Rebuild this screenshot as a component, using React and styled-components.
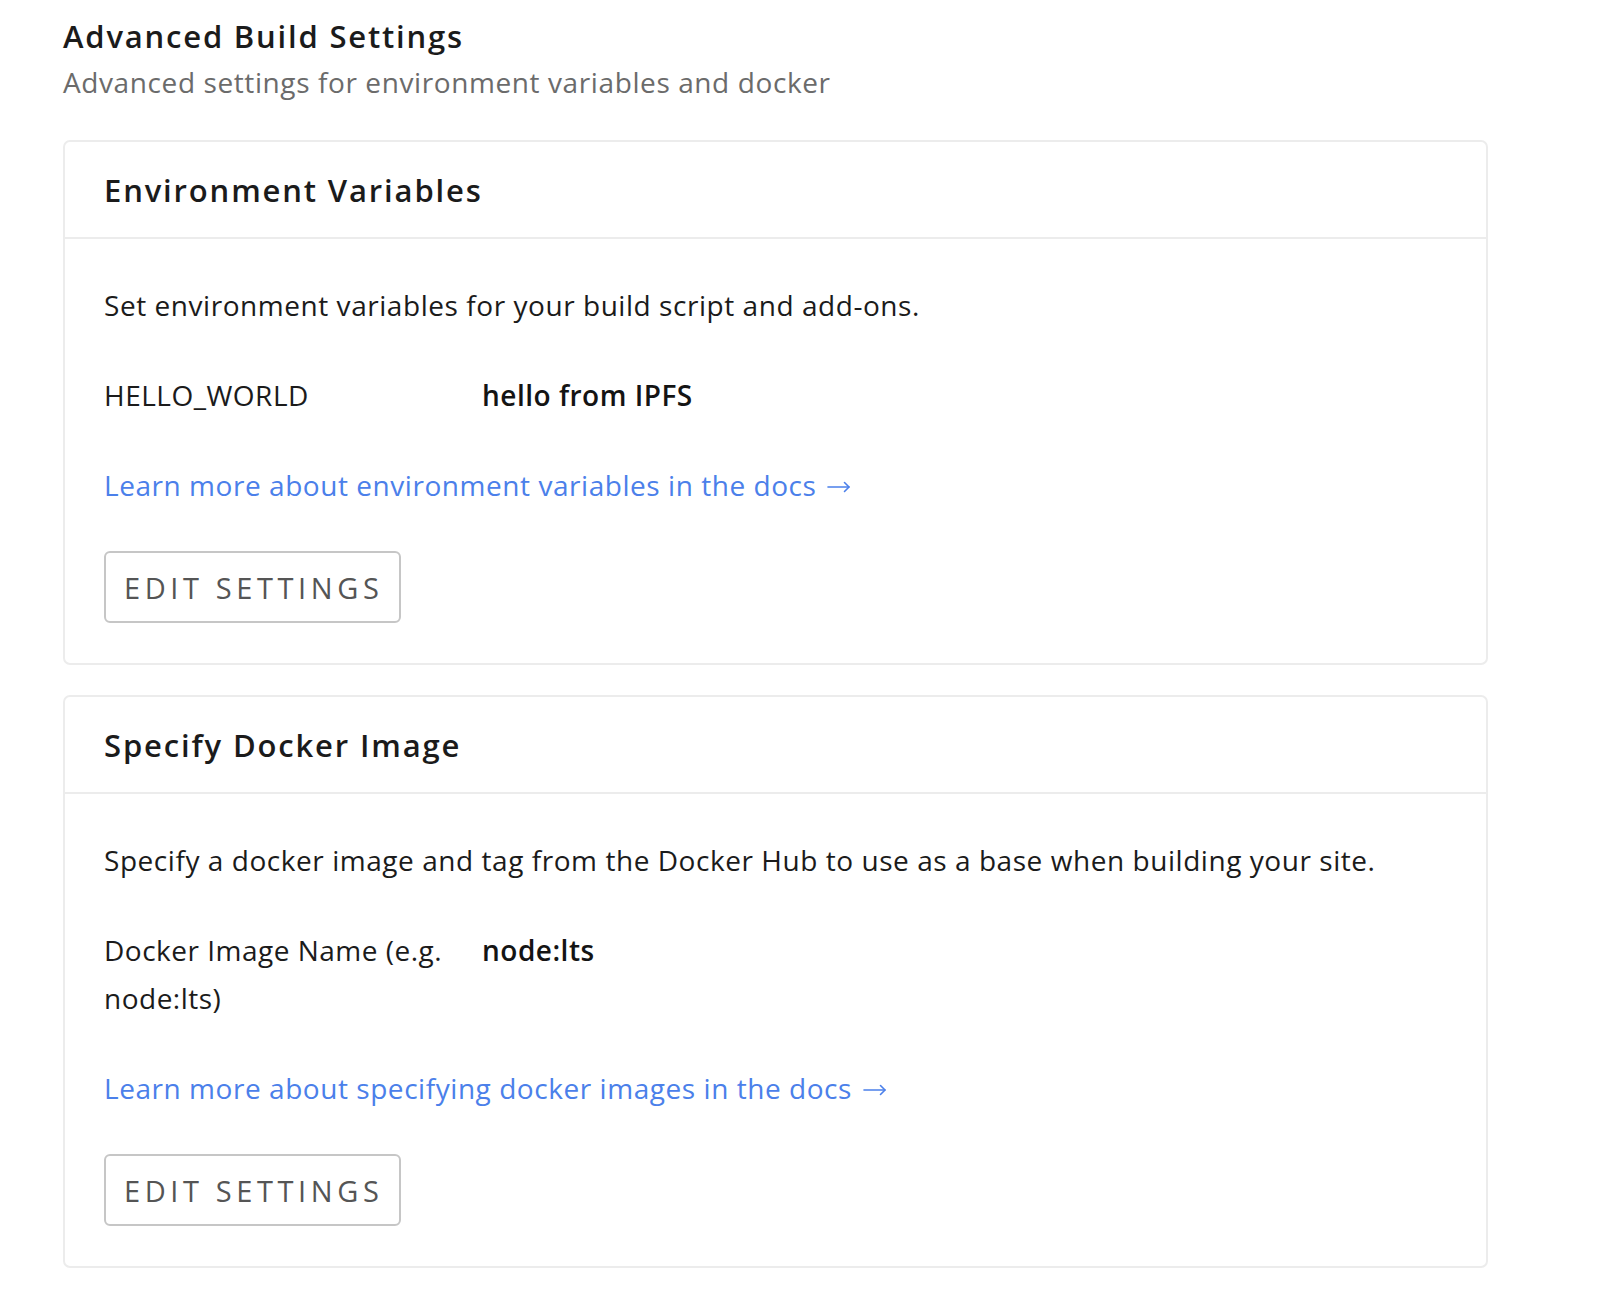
import React from "react";
import styled, { createGlobalStyle } from "styled-components";

const GlobalStyle = createGlobalStyle`
  html, body {
    margin: 0;
    padding: 0;
    background: #ffffff;
  }
  body {
    font-family: "Open Sans", "Noto Sans", "Liberation Sans", sans-serif;
    color: #1b1b1b;
    -webkit-font-smoothing: antialiased;
  }
  * { box-sizing: border-box; }
`;

const Page = styled.main`
  width: 1488px;
  padding: 16px 0 36px 63px;
`;

const Intro = styled.header`
  margin-bottom: 38px;
`;

const Title = styled.h1`
  margin: 0;
  font-size: 31px;
  line-height: 40px;
  font-weight: 600;
  letter-spacing: 1.8px;
  color: #1b1b1b;
`;

const Subtitle = styled.p`
  margin: 6px 0 0;
  font-size: 28px;
  line-height: 40px;
  font-weight: 400;
  letter-spacing: 0.6px;
  color: #6b6b6b;
`;

const Card = styled.section`
  border: 2px solid #ececec;
  border-radius: 7px;
  background: #fff;
  & + & {
    margin-top: 30px;
  }
`;

const CardHeader = styled.div`
  height: 97px;
  padding: 0 39px;
  display: flex;
  align-items: center;
  border-bottom: 2px solid #ececec;
`;

const CardTitle = styled.h2`
  margin: 0;
  font-size: 31px;
  font-weight: 600;
  letter-spacing: 1.85px;
  color: #1b1b1b;
`;

const CardBody = styled.div`
  padding: 42px 39px 40px;
  display: flex;
  flex-direction: column;
  align-items: flex-start;
  gap: 42px;
`;

const Text = styled.p`
  margin: 0;
  font-size: 28px;
  line-height: 48px;
  letter-spacing: 0.55px;
  color: #1b1b1b;
`;

const SettingRow = styled.div`
  display: grid;
  grid-template-columns: 356px 1fr;
  column-gap: 22px;
  font-size: 28px;
  line-height: 48px;
  letter-spacing: 0.5px;
`;

const SettingKey = styled.span`
  color: #1b1b1b;
  font-weight: 400;
`;

const SettingValue = styled.span`
  color: #141414;
  font-weight: 600;
`;

const DocsLink = styled.a`
  display: inline-flex;
  align-items: center;
  gap: 11px;
  height: 48px;
  font-size: 28px;
  line-height: 48px;
  letter-spacing: 0.55px;
  color: #4b80ea;
  text-decoration: none;
`;

const ArrowIcon = styled.svg`
  width: 24px;
  height: 14px;
  margin-top: 3px;
  flex: none;
`;

const Button = styled.button`
  height: 72px;
  padding: 0 16px 0 18px;
  border: 2px solid #c6c6c6;
  border-radius: 6px;
  background: #fff;
  color: #555555;
  font-family: inherit;
  font-size: 29px;
  font-weight: 400;
  letter-spacing: 4.6px;
  text-transform: uppercase;
  cursor: pointer;
`;

const Arrow = () => (
  <ArrowIcon viewBox="0 0 24 14" fill="none" stroke="currentColor" strokeWidth="1.6" strokeLinecap="round" strokeLinejoin="round" aria-hidden="true">
    <path d="M1 7h21" />
    <path d="M17.5 2.5 22 7l-4.5 4.5" />
  </ArrowIcon>
);

const sections = [
  {
    title: "Environment Variables",
    text: "Set environment variables for your build script and add-ons.",
    key: "HELLO_WORLD",
    value: "hello from IPFS",
    link: "Learn more about environment variables in the docs",
  },
  {
    title: "Specify Docker Image",
    text: "Specify a docker image and tag from the Docker Hub to use as a base when building your site.",
    key: "Docker Image Name (e.g. node:lts)",
    value: "node:lts",
    link: "Learn more about specifying docker images in the docs",
  },
];

export default function App() {
  return (
    <>
      <GlobalStyle />
      <Page>
        <Intro>
          <Title>Advanced Build Settings</Title>
          <Subtitle>Advanced settings for environment variables and docker</Subtitle>
        </Intro>
        {sections.map((s) => (
          <Card key={s.title}>
            <CardHeader>
              <CardTitle>{s.title}</CardTitle>
            </CardHeader>
            <CardBody>
              <Text>{s.text}</Text>
              <SettingRow>
                <SettingKey>{s.key}</SettingKey>
                <SettingValue>{s.value}</SettingValue>
              </SettingRow>
              <DocsLink href="#">
                <span>{s.link}</span>
                <Arrow />
              </DocsLink>
              <Button type="button">Edit settings</Button>
            </CardBody>
          </Card>
        ))}
      </Page>
    </>
  );
}
